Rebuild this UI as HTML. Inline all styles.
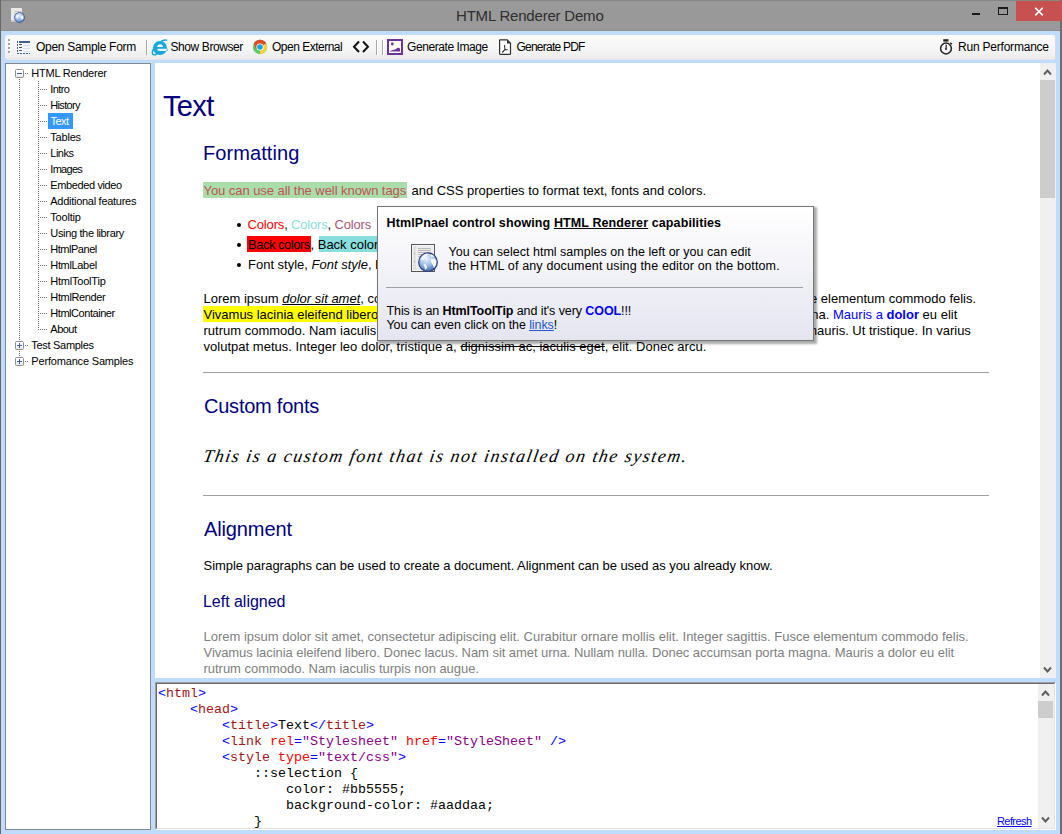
<!DOCTYPE html>
<html><head><meta charset="utf-8"><title>HTML Renderer Demo</title>
<style>
html,body{margin:0;padding:0;}
body{width:1062px;height:834px;overflow:hidden;position:relative;background:#bfdcfe;font-family:'Liberation Sans', sans-serif;}
.t{position:absolute;white-space:pre;line-height:1;}
</style></head><body>
<div style="position:absolute;left:0px;top:0px;width:1062px;height:31px;background:#999999"></div>
<div style="position:absolute;left:0px;top:0px;width:1062px;height:1px;background:#858585"></div>
<div style="position:absolute;left:0px;top:30px;width:1062px;height:1px;background:#8f8f8f"></div>
<div style="position:absolute;left:0px;top:0px;width:1px;height:834px;background:#6b6763"></div>
<div style="position:absolute;left:1060px;top:0px;width:2px;height:834px;background:#6e6d6b"></div>
<div style="position:absolute;left:1016px;top:1px;width:46px;height:20px;background:#c75050"></div>
<svg style="position:absolute;left:1033px;top:6px" width="12" height="11" viewBox="0 0 12 11"><path d="M2.2 1.8 L9.8 9.4 M9.8 1.8 L2.2 9.4" stroke="#fff" stroke-width="1.6"/></svg>
<div style="position:absolute;left:998px;top:7px;width:10px;height:8px;box-sizing:border-box;border:1px solid #1a1a1a;border-top-width:2px"></div>
<div style="position:absolute;left:972px;top:13px;width:8px;height:2px;background:#1a1a1a"></div>
<svg style="position:absolute;left:9px;top:6px" width="18" height="18" viewBox="0 0 18 18">
<rect x="2" y="2" width="11" height="13.5" fill="#e9e9e9"/>
<rect x="2" y="14.5" width="11" height="1" fill="#bdbdbd"/>
<line x1="5" y1="5.5" x2="12" y2="5.5" stroke="#c9c9c9"/><line x1="5" y1="7.5" x2="12" y2="7.5" stroke="#c9c9c9"/>
<defs><radialGradient id="ga" cx="0.4" cy="0.3" r="0.8"><stop offset="0" stop-color="#e6f0fb"/><stop offset="0.6" stop-color="#8db1e0"/><stop offset="1" stop-color="#2f5fa8"/></radialGradient></defs>
<circle cx="10.5" cy="11.5" r="5" fill="url(#ga)" stroke="#4a5a9a" stroke-width="0.9"/>
<path d="M7 10 L9 8.5 L10 9.5 L9 11.5 L8 13 Z M11.5 9.5 L14 10 L14.5 12.5 L13 14 L12 12 Z" fill="#f4f7fb"/>
</svg>
<div style="position:absolute;left:5px;top:35px;width:1051px;height:25px;box-sizing:border-box;border-radius:3px;background:linear-gradient(#fbfbfb,#f5f5f5 60%,#ececec);border-right:1px solid #dadada;border-bottom:1px solid #e6e6e6"></div>
<div style="position:absolute;left:9px;top:40px;width:2px;height:2px;background:#ffffff"></div>
<div style="position:absolute;left:8px;top:39px;width:2px;height:2px;background:#a3a3a3"></div>
<div style="position:absolute;left:9px;top:44px;width:2px;height:2px;background:#ffffff"></div>
<div style="position:absolute;left:8px;top:43px;width:2px;height:2px;background:#a3a3a3"></div>
<div style="position:absolute;left:9px;top:48px;width:2px;height:2px;background:#ffffff"></div>
<div style="position:absolute;left:8px;top:47px;width:2px;height:2px;background:#a3a3a3"></div>
<div style="position:absolute;left:9px;top:52px;width:2px;height:2px;background:#ffffff"></div>
<div style="position:absolute;left:8px;top:51px;width:2px;height:2px;background:#a3a3a3"></div>
<svg style="position:absolute;left:16px;top:40px" width="16" height="15" viewBox="0 0 16 15">
<rect x="3" y="1" width="11" height="2" fill="#3d6394"/>
<rect x="3" y="3" width="11" height="10" fill="#f4f8fc"/>
<path d="M1.5 1 V13" stroke="#3d6394" stroke-width="1" stroke-dasharray="2,1"/>
<path d="M1 13.5 H14" stroke="#3d6394" stroke-width="1" stroke-dasharray="2,1"/>
<rect x="3" y="4" width="3" height="1" fill="#555"/><rect x="3" y="7" width="3" height="1" fill="#555"/><rect x="3" y="10" width="3" height="1" fill="#555"/>
<rect x="7" y="5" width="7" height="1" fill="#d5e2ef"/><rect x="7" y="8" width="7" height="1" fill="#d5e2ef"/><rect x="7" y="11" width="7" height="1" fill="#d5e2ef"/>
</svg>
<div style="position:absolute;left:146px;top:40px;width:1px;height:15px;background:#a9a9a9"></div>
<div style="position:absolute;left:147px;top:40px;width:1px;height:15px;background:#ffffff"></div>
<div style="position:absolute;left:376px;top:40px;width:1px;height:15px;background:#a9a9a9"></div>
<div style="position:absolute;left:377px;top:40px;width:1px;height:15px;background:#ffffff"></div>
<div style="position:absolute;left:382px;top:40px;width:1px;height:15px;background:#a9a9a9"></div>
<div style="position:absolute;left:383px;top:40px;width:1px;height:15px;background:#ffffff"></div>
<svg style="position:absolute;left:151px;top:39px" width="17" height="17" viewBox="0 0 17 17">
<path fill-rule="evenodd" d="M9 2 A7 7 0 1 1 9 16 A7 7 0 1 1 9 2 Z M6 8 C6 6.3 7.3 5.2 9 5.2 C10.7 5.2 12 6.3 12 8 Z M16.5 9.7 H8 C6.8 9.7 6 10.2 6.4 11 C6.8 11.7 7.6 11.9 8.6 11.9 H16.5 Z" fill="#17a7dd"/>
<path d="M16.2 1.3 C13.8 0.2 7.5 2.5 3.5 8.2 C0.8 12 0.6 15.6 3 15.9 C4 16 5 15.5 6 15" fill="none" stroke="#17a7dd" stroke-width="1.4"/>
</svg>
<svg style="position:absolute;left:252px;top:39px" width="16" height="16" viewBox="0 0 16 16">
<circle cx="8" cy="8" r="7.2" fill="#5ec86a"/>
<path d="M8 8 L1.8 4.4 A7.2 7.2 0 0 1 14.2 4.4 Z" fill="#dc4b2a"/>
<path d="M8 8 L14.2 4.4 A7.2 7.2 0 0 1 8 15.2 Z" fill="#f7d23a"/>
<path d="M8 8 L1.8 4.4 L4.2 10.6 Z" fill="#dc4b2a"/>
<circle cx="8" cy="8" r="3.6" fill="#fff"/>
<circle cx="8" cy="8" r="2.8" fill="#1aa3dc"/>
</svg>
<svg style="position:absolute;left:352px;top:40px" width="19" height="14" viewBox="0 0 19 14"><path d="M7 1.5 L2 6.8 L7 12" fill="none" stroke="#111" stroke-width="2"/><path d="M11 1.5 L16 6.8 L11 12" fill="none" stroke="#111" stroke-width="2"/></svg>
<svg style="position:absolute;left:387px;top:39px" width="17" height="16" viewBox="0 0 17 16">
<rect x="1" y="1" width="14" height="14" fill="#fff" stroke="#6e3398" stroke-width="2"/>
<circle cx="5.3" cy="5" r="1.4" fill="#6e3398"/>
<path d="M3 12 L6 11 L9 10 L11 8.5 L13 9.5 L13 12.5 L3 12.5 Z" fill="#6e3398"/>
</svg>
<svg style="position:absolute;left:498px;top:38px" width="14" height="18" viewBox="0 0 14 18">
<path d="M2 1.9 H9.2 L12.5 5.2 V15.4 C12.5 16 12 16.4 11.4 16.4 H2.6 C2 16.4 1.6 16 1.6 15.4 V2.5 C1.6 2.1 1.8 1.9 2 1.9 Z" fill="#fff" stroke="#2e2e2e" stroke-width="1.2"/>
<path d="M9 2 V5.6 H12.4 Z" fill="#2e2e2e"/>
<path d="M6.6 7 C6.6 9 6.8 10.5 7 11.5 M7 11.5 L9.8 11.8 M7 11.5 L4.2 14.5" fill="none" stroke="#333" stroke-width="1.1"/>
</svg>
<svg style="position:absolute;left:939px;top:38px" width="15" height="18" viewBox="0 0 15 18">
<rect x="4.3" y="1.2" width="5.2" height="2.4" fill="#222"/>
<circle cx="7" cy="10.5" r="5.4" fill="none" stroke="#222" stroke-width="1.5"/>
<path d="M7 10.8 L7.3 6.6" stroke="#222" stroke-width="1.2"/>
<circle cx="7" cy="11" r="1" fill="#222"/>
<path d="M11.3 4.8 L12.8 6.3" stroke="#222" stroke-width="1.6"/>
</svg>
<div style="position:absolute;left:5px;top:63px;width:146px;height:767px;box-sizing:border-box;background:#fff;border:1px solid #828790"></div>
<div style="position:absolute;left:19px;top:79px;width:1px;height:261px;background:repeating-linear-gradient(to bottom,#6f6f6f 0,#6f6f6f 1px,transparent 1px,transparent 2px)"></div>
<div style="position:absolute;left:19px;top:351px;width:1px;height:6px;background:repeating-linear-gradient(to bottom,#6f6f6f 0,#6f6f6f 1px,transparent 1px,transparent 2px)"></div>
<div style="position:absolute;left:38px;top:81px;width:1px;height:249px;background:repeating-linear-gradient(to bottom,#6f6f6f 0,#6f6f6f 1px,transparent 1px,transparent 2px)"></div>
<div style="position:absolute;left:15px;top:69px;width:9px;height:9px;box-sizing:border-box;border:1px solid #8e8e8e;border-radius:1.5px;background:linear-gradient(#fff 45%,#e4e4e4)"></div>
<div style="position:absolute;left:17px;top:73px;width:5px;height:1px;background:#3b5aa8"></div>
<div style="position:absolute;left:25px;top:73px;width:1px;height:1px;background:#6f6f6f"></div>
<div style="position:absolute;left:27px;top:73px;width:1px;height:1px;background:#6f6f6f"></div>
<div style="position:absolute;left:40px;top:89px;width:7px;height:1px;background:repeating-linear-gradient(to right,#6f6f6f 0,#6f6f6f 1px,transparent 1px,transparent 2px)"></div>
<div style="position:absolute;left:40px;top:105px;width:7px;height:1px;background:repeating-linear-gradient(to right,#6f6f6f 0,#6f6f6f 1px,transparent 1px,transparent 2px)"></div>
<div style="position:absolute;left:40px;top:121px;width:7px;height:1px;background:repeating-linear-gradient(to right,#6f6f6f 0,#6f6f6f 1px,transparent 1px,transparent 2px)"></div>
<div style="position:absolute;left:48px;top:113px;width:25px;height:16px;background:#3399ff"></div>
<div style="position:absolute;left:40px;top:137px;width:7px;height:1px;background:repeating-linear-gradient(to right,#6f6f6f 0,#6f6f6f 1px,transparent 1px,transparent 2px)"></div>
<div style="position:absolute;left:40px;top:153px;width:7px;height:1px;background:repeating-linear-gradient(to right,#6f6f6f 0,#6f6f6f 1px,transparent 1px,transparent 2px)"></div>
<div style="position:absolute;left:40px;top:169px;width:7px;height:1px;background:repeating-linear-gradient(to right,#6f6f6f 0,#6f6f6f 1px,transparent 1px,transparent 2px)"></div>
<div style="position:absolute;left:40px;top:185px;width:7px;height:1px;background:repeating-linear-gradient(to right,#6f6f6f 0,#6f6f6f 1px,transparent 1px,transparent 2px)"></div>
<div style="position:absolute;left:40px;top:201px;width:7px;height:1px;background:repeating-linear-gradient(to right,#6f6f6f 0,#6f6f6f 1px,transparent 1px,transparent 2px)"></div>
<div style="position:absolute;left:40px;top:217px;width:7px;height:1px;background:repeating-linear-gradient(to right,#6f6f6f 0,#6f6f6f 1px,transparent 1px,transparent 2px)"></div>
<div style="position:absolute;left:40px;top:233px;width:7px;height:1px;background:repeating-linear-gradient(to right,#6f6f6f 0,#6f6f6f 1px,transparent 1px,transparent 2px)"></div>
<div style="position:absolute;left:40px;top:249px;width:7px;height:1px;background:repeating-linear-gradient(to right,#6f6f6f 0,#6f6f6f 1px,transparent 1px,transparent 2px)"></div>
<div style="position:absolute;left:40px;top:265px;width:7px;height:1px;background:repeating-linear-gradient(to right,#6f6f6f 0,#6f6f6f 1px,transparent 1px,transparent 2px)"></div>
<div style="position:absolute;left:40px;top:281px;width:7px;height:1px;background:repeating-linear-gradient(to right,#6f6f6f 0,#6f6f6f 1px,transparent 1px,transparent 2px)"></div>
<div style="position:absolute;left:40px;top:297px;width:7px;height:1px;background:repeating-linear-gradient(to right,#6f6f6f 0,#6f6f6f 1px,transparent 1px,transparent 2px)"></div>
<div style="position:absolute;left:40px;top:313px;width:7px;height:1px;background:repeating-linear-gradient(to right,#6f6f6f 0,#6f6f6f 1px,transparent 1px,transparent 2px)"></div>
<div style="position:absolute;left:40px;top:329px;width:7px;height:1px;background:repeating-linear-gradient(to right,#6f6f6f 0,#6f6f6f 1px,transparent 1px,transparent 2px)"></div>
<div style="position:absolute;left:15px;top:341px;width:9px;height:9px;box-sizing:border-box;border:1px solid #8e8e8e;border-radius:1.5px;background:linear-gradient(#fff 45%,#e4e4e4)"></div>
<div style="position:absolute;left:17px;top:345px;width:5px;height:1px;background:#3b5aa8"></div>
<div style="position:absolute;left:19px;top:343px;width:1px;height:5px;background:#3b5aa8"></div>
<div style="position:absolute;left:25px;top:345px;width:1px;height:1px;background:#6f6f6f"></div>
<div style="position:absolute;left:27px;top:345px;width:1px;height:1px;background:#6f6f6f"></div>
<div style="position:absolute;left:15px;top:357px;width:9px;height:9px;box-sizing:border-box;border:1px solid #8e8e8e;border-radius:1.5px;background:linear-gradient(#fff 45%,#e4e4e4)"></div>
<div style="position:absolute;left:17px;top:361px;width:5px;height:1px;background:#3b5aa8"></div>
<div style="position:absolute;left:19px;top:359px;width:1px;height:5px;background:#3b5aa8"></div>
<div style="position:absolute;left:25px;top:361px;width:1px;height:1px;background:#6f6f6f"></div>
<div style="position:absolute;left:27px;top:361px;width:1px;height:1px;background:#6f6f6f"></div>
<div style="position:absolute;left:155px;top:63px;width:901px;height:615px;background:#fff"></div>
<div style="position:absolute;left:1040px;top:63px;width:16px;height:615px;background:#f0f0f0"></div>
<div style="position:absolute;left:1040px;top:80px;width:15px;height:118px;background:#cdcdcd"></div>
<svg style="position:absolute;left:1043px;top:67px" width="10" height="10" viewBox="0 0 10 10"><path d="M1 7.5 L4.5 3.5 L8 7.5" fill="none" stroke="#606060" stroke-width="2"/></svg>
<svg style="position:absolute;left:1043px;top:665px" width="10" height="10" viewBox="0 0 10 10"><path d="M1 2.5 L4.5 6.5 L8 2.5" fill="none" stroke="#606060" stroke-width="2"/></svg>
<div style="position:absolute;left:203px;top:182px;width:204px;height:16px;background:#aaddaa"></div>
<div style="position:absolute;left:237px;top:223px;width:4px;height:4px;background:#000;border-radius:2px"></div>
<div style="position:absolute;left:237px;top:243px;width:4px;height:4px;background:#000;border-radius:2px"></div>
<div style="position:absolute;left:237px;top:263px;width:4px;height:4px;background:#000;border-radius:2px"></div>
<div style="position:absolute;left:247px;top:236px;width:64px;height:16px;background:#ff0000"></div>
<div style="position:absolute;left:319px;top:236px;width:70px;height:16px;background:#88dddd"></div>
<div style="position:absolute;left:203px;top:306px;width:180px;height:16px;background:#ffff00"></div>
<div style="position:absolute;left:203px;top:372px;width:786px;height:1px;background:#a0a0a0"></div>
<div style="position:absolute;left:203px;top:495px;width:786px;height:1px;background:#a0a0a0"></div>
<div style="position:absolute;left:155px;top:682px;width:901px;height:148px;box-sizing:border-box;border-left:1px solid #a0a0a0;border-top:1px solid #a0a0a0;border-right:1px solid #fff;border-bottom:1px solid #fff"></div>
<div style="position:absolute;left:156px;top:683px;width:899px;height:146px;box-sizing:border-box;background:#fff;border-left:1px solid #696969;border-top:1px solid #696969;border-right:1px solid #e3e3e3;border-bottom:1px solid #e3e3e3"></div>
<div style="position:absolute;left:1038px;top:684px;width:16px;height:144px;background:#f0f0f0"></div>
<div style="position:absolute;left:1038px;top:701px;width:15px;height:17px;background:#cdcdcd"></div>
<svg style="position:absolute;left:1041px;top:688px" width="10" height="10" viewBox="0 0 10 10"><path d="M1 7.5 L4.5 3.5 L8 7.5" fill="none" stroke="#606060" stroke-width="2"/></svg>
<svg style="position:absolute;left:1041px;top:815px" width="10" height="10" viewBox="0 0 10 10"><path d="M1 2.5 L4.5 6.5 L8 2.5" fill="none" stroke="#606060" stroke-width="2"/></svg>
<div class="t" style="left:456px;top:8px;font-family:'Liberation Sans', sans-serif;font-size:15px;font-weight:400;color:#2e2e2e;letter-spacing:-0.200px;">HTML Renderer Demo</div>
<div class="t" style="left:36px;top:41px;font-family:'Liberation Sans', sans-serif;font-size:12px;font-weight:400;color:#000;letter-spacing:-0.300px;">Open Sample Form</div>
<div class="t" style="left:170.5px;top:41px;font-family:'Liberation Sans', sans-serif;font-size:12px;font-weight:400;color:#000;letter-spacing:-0.409px;">Show Browser</div>
<div class="t" style="left:272px;top:41px;font-family:'Liberation Sans', sans-serif;font-size:12px;font-weight:400;color:#000;letter-spacing:-0.500px;">Open External</div>
<div class="t" style="left:407px;top:41px;font-family:'Liberation Sans', sans-serif;font-size:12px;font-weight:400;color:#000;letter-spacing:-0.423px;">Generate Image</div>
<div class="t" style="left:516.5px;top:41px;font-family:'Liberation Sans', sans-serif;font-size:12px;font-weight:400;color:#000;letter-spacing:-0.773px;">Generate PDF</div>
<div class="t" style="left:958px;top:41px;font-family:'Liberation Sans', sans-serif;font-size:12px;font-weight:400;color:#000;letter-spacing:-0.214px;">Run Performance</div>
<div class="t" style="left:31.3px;top:68px;font-family:'Liberation Sans', sans-serif;font-size:11px;font-weight:400;color:#000;letter-spacing:-0.233px;">HTML Renderer</div>
<div class="t" style="left:50.3px;top:84px;font-family:'Liberation Sans', sans-serif;font-size:11px;font-weight:400;color:#000;letter-spacing:-0.625px;">Intro</div>
<div class="t" style="left:50.3px;top:100px;font-family:'Liberation Sans', sans-serif;font-size:11px;font-weight:400;color:#000;letter-spacing:-0.667px;">History</div>
<div class="t" style="left:50.5px;top:116px;font-family:'Liberation Sans', sans-serif;font-size:11px;font-weight:400;color:#fff;letter-spacing:-0.500px;">Text</div>
<div class="t" style="left:50.3px;top:132px;font-family:'Liberation Sans', sans-serif;font-size:11px;font-weight:400;color:#000;letter-spacing:-0.200px;">Tables</div>
<div class="t" style="left:50.3px;top:148px;font-family:'Liberation Sans', sans-serif;font-size:11px;font-weight:400;color:#000;letter-spacing:-0.500px;">Links</div>
<div class="t" style="left:50.3px;top:164px;font-family:'Liberation Sans', sans-serif;font-size:11px;font-weight:400;color:#000;letter-spacing:-0.700px;">Images</div>
<div class="t" style="left:50.3px;top:180px;font-family:'Liberation Sans', sans-serif;font-size:11px;font-weight:400;color:#000;letter-spacing:-0.383px;">Embeded video</div>
<div class="t" style="left:50.3px;top:196px;font-family:'Liberation Sans', sans-serif;font-size:11px;font-weight:400;color:#000;letter-spacing:-0.278px;">Additional features</div>
<div class="t" style="left:50.3px;top:212px;font-family:'Liberation Sans', sans-serif;font-size:11px;font-weight:400;color:#000;letter-spacing:-0.200px;">Tooltip</div>
<div class="t" style="left:50.3px;top:228px;font-family:'Liberation Sans', sans-serif;font-size:11px;font-weight:400;color:#000;letter-spacing:-0.344px;">Using the library</div>
<div class="t" style="left:50.3px;top:244px;font-family:'Liberation Sans', sans-serif;font-size:11px;font-weight:400;color:#000;letter-spacing:-0.475px;">HtmlPanel</div>
<div class="t" style="left:50.3px;top:260px;font-family:'Liberation Sans', sans-serif;font-size:11px;font-weight:400;color:#000;letter-spacing:-0.338px;">HtmlLabel</div>
<div class="t" style="left:50.3px;top:276px;font-family:'Liberation Sans', sans-serif;font-size:11px;font-weight:400;color:#000;letter-spacing:-0.220px;">HtmlToolTip</div>
<div class="t" style="left:50.3px;top:292px;font-family:'Liberation Sans', sans-serif;font-size:11px;font-weight:400;color:#000;letter-spacing:-0.356px;">HtmlRender</div>
<div class="t" style="left:50.3px;top:308px;font-family:'Liberation Sans', sans-serif;font-size:11px;font-weight:400;color:#000;letter-spacing:-0.450px;">HtmlContainer</div>
<div class="t" style="left:50.3px;top:324px;font-family:'Liberation Sans', sans-serif;font-size:11px;font-weight:400;color:#000;letter-spacing:-0.500px;">About</div>
<div class="t" style="left:31.3px;top:340px;font-family:'Liberation Sans', sans-serif;font-size:11px;font-weight:400;color:#000;letter-spacing:-0.300px;">Test Samples</div>
<div class="t" style="left:31.3px;top:356px;font-family:'Liberation Sans', sans-serif;font-size:11px;font-weight:400;color:#000;letter-spacing:-0.176px;">Perfomance Samples</div>
<div class="t" style="left:163px;top:92px;font-family:'Liberation Sans', sans-serif;font-size:29px;font-weight:400;color:#000080;letter-spacing:-0.667px;">Text</div>
<div class="t" style="left:203px;top:143px;font-family:'Liberation Sans', sans-serif;font-size:20px;font-weight:400;color:#000080;letter-spacing:0.089px;">Formatting</div>
<div class="t" style="left:203.5px;top:184px;font-family:'Liberation Sans', sans-serif;font-size:13px;font-weight:400;color:#bb5555;letter-spacing:-0.059px;">You can use all the well known tags</div>
<div class="t" style="left:411.5px;top:184px;font-family:'Liberation Sans', sans-serif;font-size:13px;font-weight:400;color:#000;letter-spacing:-0.020px;">and CSS properties to format text, fonts and colors.</div>
<div class="t" style="left:247.6px;top:218px;font-family:'Liberation Sans', sans-serif;font-size:13px;font-weight:400;color:#000;letter-spacing:-0.171px;"><span style="color:#ff0000">Colors</span>, <span style="color:#88dddd">Colors</span>, <span style="color:#aa5577">Colors</span></div>
<div class="t" style="left:248px;top:238px;font-family:'Liberation Sans', sans-serif;font-size:13px;font-weight:400;color:#000;letter-spacing:-0.500px;">Back colors</div>
<div class="t" style="left:310.5px;top:238px;font-family:'Liberation Sans', sans-serif;font-size:13px;font-weight:400;color:#000;">, Back colors</div>
<div class="t" style="left:248px;top:258px;font-family:'Liberation Sans', sans-serif;font-size:13px;font-weight:400;color:#000;">Font style, <i>Font style</i>, <b>Font style</b></div>
<div class="t" style="left:203.5px;top:292px;font-family:'Liberation Sans', sans-serif;font-size:13px;font-weight:400;color:#000;">Lorem ipsum <i><u>dolor sit amet</u></i>, consectetur adipiscing</div>
<div class="t" style="left:690px;top:292px;font-family:'Liberation Sans', sans-serif;font-size:13px;font-weight:400;color:#000;">Integer sagittis. Fusce elementum commodo felis.</div>
<div class="t" style="left:203.5px;top:308px;font-family:'Liberation Sans', sans-serif;font-size:13px;font-weight:400;color:#000;">Vivamus lacinia eleifend libero. Donec lacus.</div>
<div class="t" style="left:752.8px;top:308px;font-family:'Liberation Sans', sans-serif;font-size:13px;font-weight:400;color:#000;">porta magna. <span style="color:#0000ff">Mauris a <b>dolor</b></span> eu elit</div>
<div class="t" style="left:203.5px;top:324px;font-family:'Liberation Sans', sans-serif;font-size:13px;font-weight:400;color:#000;">rutrum commodo. Nam iaculis turpis non augue.</div>
<div class="t" style="left:757px;top:324px;font-family:'Liberation Sans', sans-serif;font-size:13px;font-weight:400;color:#000;">egestas mauris. Ut tristique. In varius</div>
<div class="t" style="left:203.5px;top:340px;font-family:'Liberation Sans', sans-serif;font-size:13px;font-weight:400;color:#000;letter-spacing:0.022px;">volutpat metus. Integer leo dolor, tristique a, <s>dignissim ac, iaculis eget</s>, elit. Donec arcu.</div>
<div class="t" style="left:204px;top:396px;font-family:'Liberation Sans', sans-serif;font-size:20px;font-weight:400;color:#000080;letter-spacing:-0.227px;">Custom fonts</div>
<div class="t" style="left:202px;top:447px;font-family:'Liberation Serif', serif;font-size:18px;font-weight:400;color:#000;font-style:italic;letter-spacing:1.491px;transform:skewX(-10deg);transform-origin:0 100%;">This is a custom font that is not installed on the system.</div>
<div class="t" style="left:204px;top:519px;font-family:'Liberation Sans', sans-serif;font-size:20px;font-weight:400;color:#000080;letter-spacing:-0.125px;">Alignment</div>
<div class="t" style="left:203.5px;top:559px;font-family:'Liberation Sans', sans-serif;font-size:13px;font-weight:400;color:#000;letter-spacing:-0.043px;">Simple paragraphs can be used to create a document. Alignment can be used as you already know.</div>
<div class="t" style="left:203px;top:594px;font-family:'Liberation Sans', sans-serif;font-size:16px;font-weight:400;color:#000080;letter-spacing:-0.027px;">Left aligned</div>
<div class="t" style="left:203.5px;top:630px;font-family:'Liberation Sans', sans-serif;font-size:13px;font-weight:400;color:#808080;">Lorem ipsum dolor sit amet, consectetur adipiscing elit. Curabitur ornare mollis elit. Integer sagittis. Fusce elementum commodo felis.</div>
<div class="t" style="left:203.5px;top:646px;font-family:'Liberation Sans', sans-serif;font-size:13px;font-weight:400;color:#808080;letter-spacing:-0.055px;">Vivamus lacinia eleifend libero. Donec lacus. Nam sit amet urna. Nullam nulla. Donec accumsan porta magna. Mauris a dolor eu elit</div>
<div class="t" style="left:203.5px;top:662px;font-family:'Liberation Sans', sans-serif;font-size:13px;font-weight:400;color:#808080;letter-spacing:-0.027px;">rutrum commodo. Nam iaculis turpis non augue.</div>
<div class="t" style="left:158px;top:687px;font-family:'Liberation Mono', monospace;font-size:13.333px;font-weight:400;color:#000;"><span style="color:#0000ff">&lt;</span><span style="color:#a31515">html</span><span style="color:#0000ff">&gt;</span></div>
<div class="t" style="left:158px;top:703px;font-family:'Liberation Mono', monospace;font-size:13.333px;font-weight:400;color:#000;">    <span style="color:#0000ff">&lt;</span><span style="color:#a31515">head</span><span style="color:#0000ff">&gt;</span></div>
<div class="t" style="left:158px;top:719px;font-family:'Liberation Mono', monospace;font-size:13.333px;font-weight:400;color:#000;">        <span style="color:#0000ff">&lt;</span><span style="color:#a31515">title</span><span style="color:#0000ff">&gt;</span>Text<span style="color:#0000ff">&lt;/</span><span style="color:#a31515">title</span><span style="color:#0000ff">&gt;</span></div>
<div class="t" style="left:158px;top:735px;font-family:'Liberation Mono', monospace;font-size:13.333px;font-weight:400;color:#000;">        <span style="color:#0000ff">&lt;</span><span style="color:#a31515">link</span> <span style="color:#ff0000">rel</span><span style="color:#0000ff">=</span><span style="color:#8b008b">&quot;Stylesheet&quot;</span> <span style="color:#ff0000">href</span><span style="color:#0000ff">=</span><span style="color:#8b008b">&quot;StyleSheet&quot;</span> <span style="color:#0000ff">/&gt;</span></div>
<div class="t" style="left:158px;top:751px;font-family:'Liberation Mono', monospace;font-size:13.333px;font-weight:400;color:#000;">        <span style="color:#0000ff">&lt;</span><span style="color:#a31515">style</span> <span style="color:#ff0000">type</span><span style="color:#0000ff">=</span><span style="color:#8b008b">&quot;text/css&quot;</span><span style="color:#0000ff">&gt;</span></div>
<div class="t" style="left:158px;top:767px;font-family:'Liberation Mono', monospace;font-size:13.333px;font-weight:400;color:#000;">            ::selection {</div>
<div class="t" style="left:158px;top:783px;font-family:'Liberation Mono', monospace;font-size:13.333px;font-weight:400;color:#000;">                color: #bb5555;</div>
<div class="t" style="left:158px;top:799px;font-family:'Liberation Mono', monospace;font-size:13.333px;font-weight:400;color:#000;">                background-color: #aaddaa;</div>
<div class="t" style="left:158px;top:815px;font-family:'Liberation Mono', monospace;font-size:13.333px;font-weight:400;color:#000;">            }</div>
<div style="position:absolute;left:377px;top:206px;width:437px;height:135px;box-sizing:border-box;border:1px solid #767676;background:linear-gradient(#ffffff,#e4e5f0);box-shadow:2px 2px 2px 1px rgba(0,0,0,0.33)"></div>
<div style="position:absolute;left:157px;top:828px;width:880px;height:1px;background:#e3e3e3"></div>
<div class="t" style="left:386.5px;top:217px;font-family:'Liberation Sans', sans-serif;font-size:12.5px;font-weight:700;color:#000;letter-spacing:0.108px;">HtmlPnael control showing <u>HTML Renderer</u> capabilities</div>
<div class="t" style="left:448.5px;top:246px;font-family:'Liberation Sans', sans-serif;font-size:12.5px;font-weight:400;color:#000;letter-spacing:0.009px;">You can select html samples on the left or you can edit</div>
<div class="t" style="left:448.5px;top:260px;font-family:'Liberation Sans', sans-serif;font-size:12.5px;font-weight:400;color:#000;letter-spacing:0.155px;">the HTML of any document using the editor on the bottom.</div>
<div class="t" style="left:386.5px;top:305px;font-family:'Liberation Sans', sans-serif;font-size:12.5px;font-weight:400;color:#000;letter-spacing:-0.086px;">This is an <b>HtmlToolTip</b> and it's very <b style="color:#0000ff">COOL</b>!!!</div>
<div class="t" style="left:386.5px;top:319px;font-family:'Liberation Sans', sans-serif;font-size:12.5px;font-weight:400;color:#000;letter-spacing:-0.081px;">You can even click on the <u style="color:#2255cc">links</u>!</div>
<div class="t" style="left:997px;top:816px;font-family:'Liberation Sans', sans-serif;font-size:11px;font-weight:400;color:#0000ff;letter-spacing:-0.583px;"><u>Refresh</u></div>
<svg style="position:absolute;left:409px;top:242px" width="30" height="32" viewBox="0 0 30 32">
<rect x="2.5" y="2.5" width="23" height="27" fill="#f7f7f7" stroke="#555" stroke-width="1"/>
<rect x="4" y="4" width="20" height="24" fill="#ececec"/>
<rect x="4" y="4" width="3" height="24" fill="#e2e2e2"/>
<rect x="5" y="11" width="1" height="1" fill="#999"/><rect x="5" y="19" width="1" height="1" fill="#999"/>
<line x1="9" y1="6.5" x2="22" y2="6.5" stroke="#b9b9b9"/><line x1="9" y1="8.5" x2="22" y2="8.5" stroke="#b9b9b9"/><line x1="9" y1="10.5" x2="22" y2="10.5" stroke="#b9b9b9"/><line x1="9" y1="12.5" x2="20" y2="12.5" stroke="#b9b9b9"/><line x1="9" y1="14.5" x2="14" y2="14.5" stroke="#c4c4c4"/>
<defs><radialGradient id="gl" cx="0.42" cy="0.3" r="0.75"><stop offset="0" stop-color="#eef5fc"/><stop offset="0.55" stop-color="#93b8e4"/><stop offset="1" stop-color="#2a5ca6"/></radialGradient></defs>
<circle cx="19" cy="20.2" r="9.3" fill="url(#gl)" stroke="#2d3f86" stroke-width="1.2"/>
<path d="M11.5 17.5 C12.5 14.5 15 12 18 11.5 L19.5 12.5 L17 14 L15.5 17 L13 18.5 Z" fill="#f6f8fb"/>
<path d="M14.5 22 L17 22.5 L18 25.5 L16.5 28 L15.5 25 Z" fill="#f6f8fb"/>
<path d="M22 17 L25.5 16.5 L27.5 19 L27 23 L25 26 L23.5 22.5 L22 20 Z" fill="#f6f8fb"/>
<path d="M21 12.5 L24 13 L25 15 L22.5 15 Z" fill="#f6f8fb"/>
</svg>
<div style="position:absolute;left:386px;top:287px;width:417px;height:1px;background:#a0a0a0"></div>
</body></html>
